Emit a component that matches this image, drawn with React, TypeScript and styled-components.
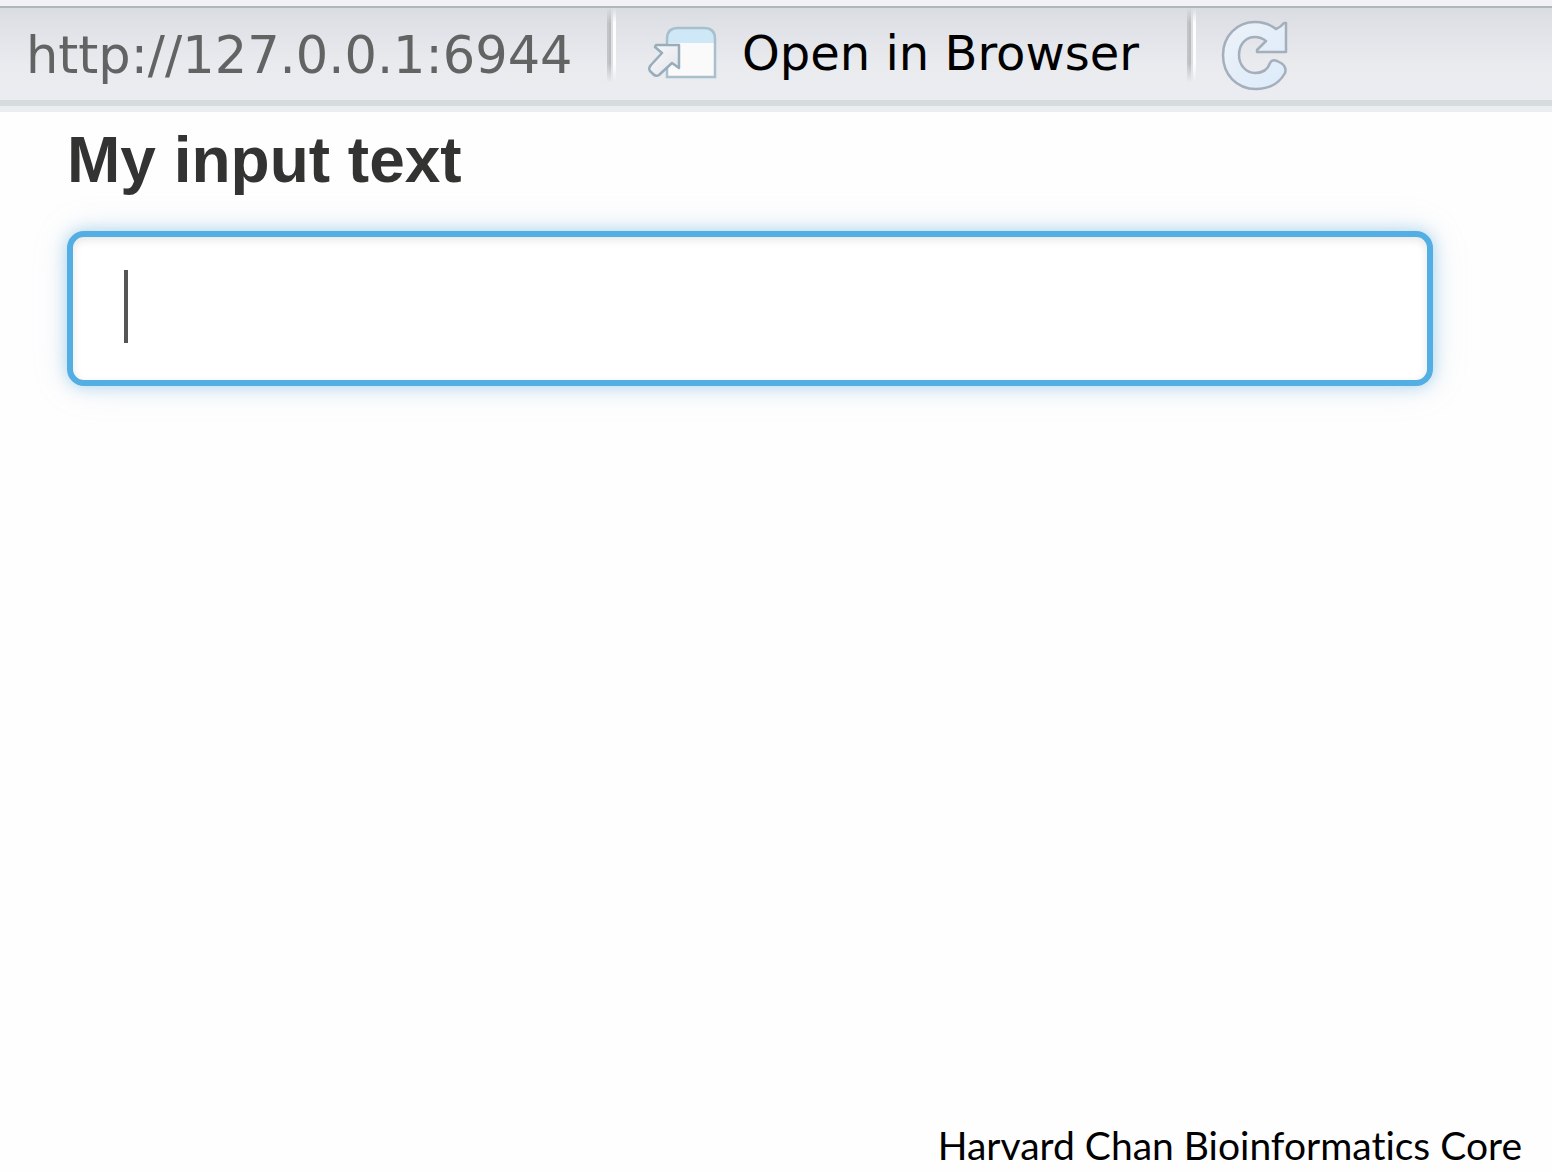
import React from "react";
import styled, { createGlobalStyle } from "styled-components";

const GlobalStyle = createGlobalStyle`
  * { box-sizing: border-box; }
  body { margin: 0; background: #fefefe; }
`;

const uiFont = `"DejaVu Sans", "Noto Sans", sans-serif`;

const Page = styled.div`
  display: flex;
  flex-direction: column;
  min-height: 100vh;
  overflow: hidden;
`;

const Toolbar = styled.header`
  display: flex;
  align-items: center;
  height: 112px;
  padding: 0 24px 12px;
  border-top: 6px solid #f2f1f6;
  background:
    linear-gradient(#b0b7bb, #b0b7bb) top / 100% 2px no-repeat,
    linear-gradient(#ebedf1, #ebedf1) bottom / 100% 6px no-repeat,
    linear-gradient(#d6dbdd, #d6dbdd) bottom / 100% 12px no-repeat,
    linear-gradient(#d9dce1, #e2e4e9 30px, #e9ebef 60px, #ecedf2);
`;

const Address = styled.span`
  width: 583px;
  padding: 6px 0 0 2px;
  color: #626463;
  font: 51px/60px ${uiFont};
  white-space: nowrap;
`;

const Divider = styled.span`
  width: 10px;
  height: 74px;
  margin-bottom: 16px;
  background: linear-gradient(90deg, #c3c4c8 0 2px, #bbbcc0 2px 4px, #dfe0e4 4px 6px, #fdfdfe 6px 9px, transparent 9px);
  mask-image: linear-gradient(transparent, #000 20%, #000 75%, transparent);
`;

const ToolButton = styled.button`
  display: flex;
  align-items: center;
  gap: 25px;
  margin: 0;
  padding: 0;
  border: 0;
  background: none;
  color: #000;
  font: 48px/56px ${uiFont};
  white-space: nowrap;
  cursor: pointer;
`;

const OpenButton = styled(ToolButton)`
  width: 570px;
  padding-left: 30px;
`;

const ReloadButton = styled(ToolButton)`
  padding: 4px 0 0 24px;
`;

const Content = styled.main`
  flex: 1;
  display: flex;
  flex-direction: column;
  gap: 35px;
  padding: 12px 119px 0 67px;
`;

const FieldLabel = styled.label`
  color: #333332;
  font: bold 64px/72px "Liberation Sans", Arial, sans-serif;
`;

const Field = styled.div`
  display: flex;
  align-items: center;
  height: 155px;
  padding: 0 51px;
  border: 6px solid #53aee3;
  border-radius: 17px;
  background: #fff;
  box-shadow:
    inset 0 3px 9px rgba(0, 0, 0, 0.1),
    0 0 16px rgba(83, 174, 227, 0.45),
    0 0 36px rgba(120, 160, 200, 0.18);
`;

const Caret = styled.span`
  width: 4px;
  height: 73px;
  margin-bottom: 4px;
  background: #555;
`;

const TextInput = styled.input`
  flex: 1;
  min-width: 0;
  height: 100%;
  padding: 0;
  border: 0;
  outline: 0;
  background: none;
  color: #555;
  font: 60px/72px "Liberation Sans", Arial, sans-serif;
`;

const Footer = styled.footer`
  padding: 0 30px 3px;
  color: #000;
  font: 39px/48px Lato, "Noto Sans", sans-serif;
  font-variant-ligatures: none;
  text-align: right;
`;

function OpenWindowIcon() {
  return (
    <svg width="70" height="54" viewBox="0 0 70 54" aria-hidden="true">
      <defs>
        <linearGradient id="arrowFill" x1="0" y1="0" x2="1" y2="1">
          <stop offset="0" stopColor="#f8f8fb" />
          <stop offset="1" stopColor="#e3e4ea" />
        </linearGradient>
      </defs>
      <path d="M20 51V13Q20 2 31 2H57Q68 2 68 13V51Z" fill="#fafafb" />
      <path d="M20 17V13Q20 2 31 2H57Q68 2 68 13V17Z" fill="#cfe8f7" />
      <path d="M20 51V13Q20 2 31 2H57Q68 2 68 13V51Z" fill="none" stroke="#a9c0cc" strokeWidth="2.5" />
      <path
        d="M9 19H32V42L25 37L12 49Q9 51 6 48L3 45Q1 42 4 39L15 27L8 21Z"
        fill="url(#arrowFill)"
        stroke="#98adb9"
        strokeWidth="2.5"
        strokeLinejoin="round"
      />
    </svg>
  );
}

function ReloadIcon() {
  return (
    <svg width="68" height="72" viewBox="0 0 68 72" aria-hidden="true">
      <defs>
        <linearGradient id="reloadFill" x1="0" y1="0" x2="1" y2="1">
          <stop offset="0" stopColor="#edf2f8" />
          <stop offset="0.5" stopColor="#e4eef9" />
          <stop offset="1" stopColor="#dcebfa" />
        </linearGradient>
      </defs>
      <path
        d="M65 4V33H36V31L45 22Q40 18 34 18C25 18 18 25 18 36C18 46 25 54 34 54C42 54 47 50 49 44Q51 40 56 42L60 44Q66 48 64 54C58 65 48 70 35 70C15 70 2 55 2 36C2 17 16 3 34 3Q46 3 55 10Q60 8 63 4Z"
        fill="url(#reloadFill)"
        stroke="#a4afbb"
        strokeWidth="2.5"
        strokeLinejoin="round"
      />
    </svg>
  );
}

export default function App() {
  return (
    <Page>
      <GlobalStyle />
      <Toolbar>
        <Address>http://127.0.0.1:6944</Address>
        <Divider />
        <OpenButton type="button">
          <OpenWindowIcon />
          Open in Browser
        </OpenButton>
        <Divider />
        <ReloadButton type="button" aria-label="Reload">
          <ReloadIcon />
        </ReloadButton>
      </Toolbar>
      <Content>
        <FieldLabel htmlFor="my-input">My input text</FieldLabel>
        <Field>
          <Caret />
          <TextInput id="my-input" type="text" />
        </Field>
      </Content>
      <Footer>Harvard Chan Bioinformatics Core</Footer>
    </Page>
  );
}
